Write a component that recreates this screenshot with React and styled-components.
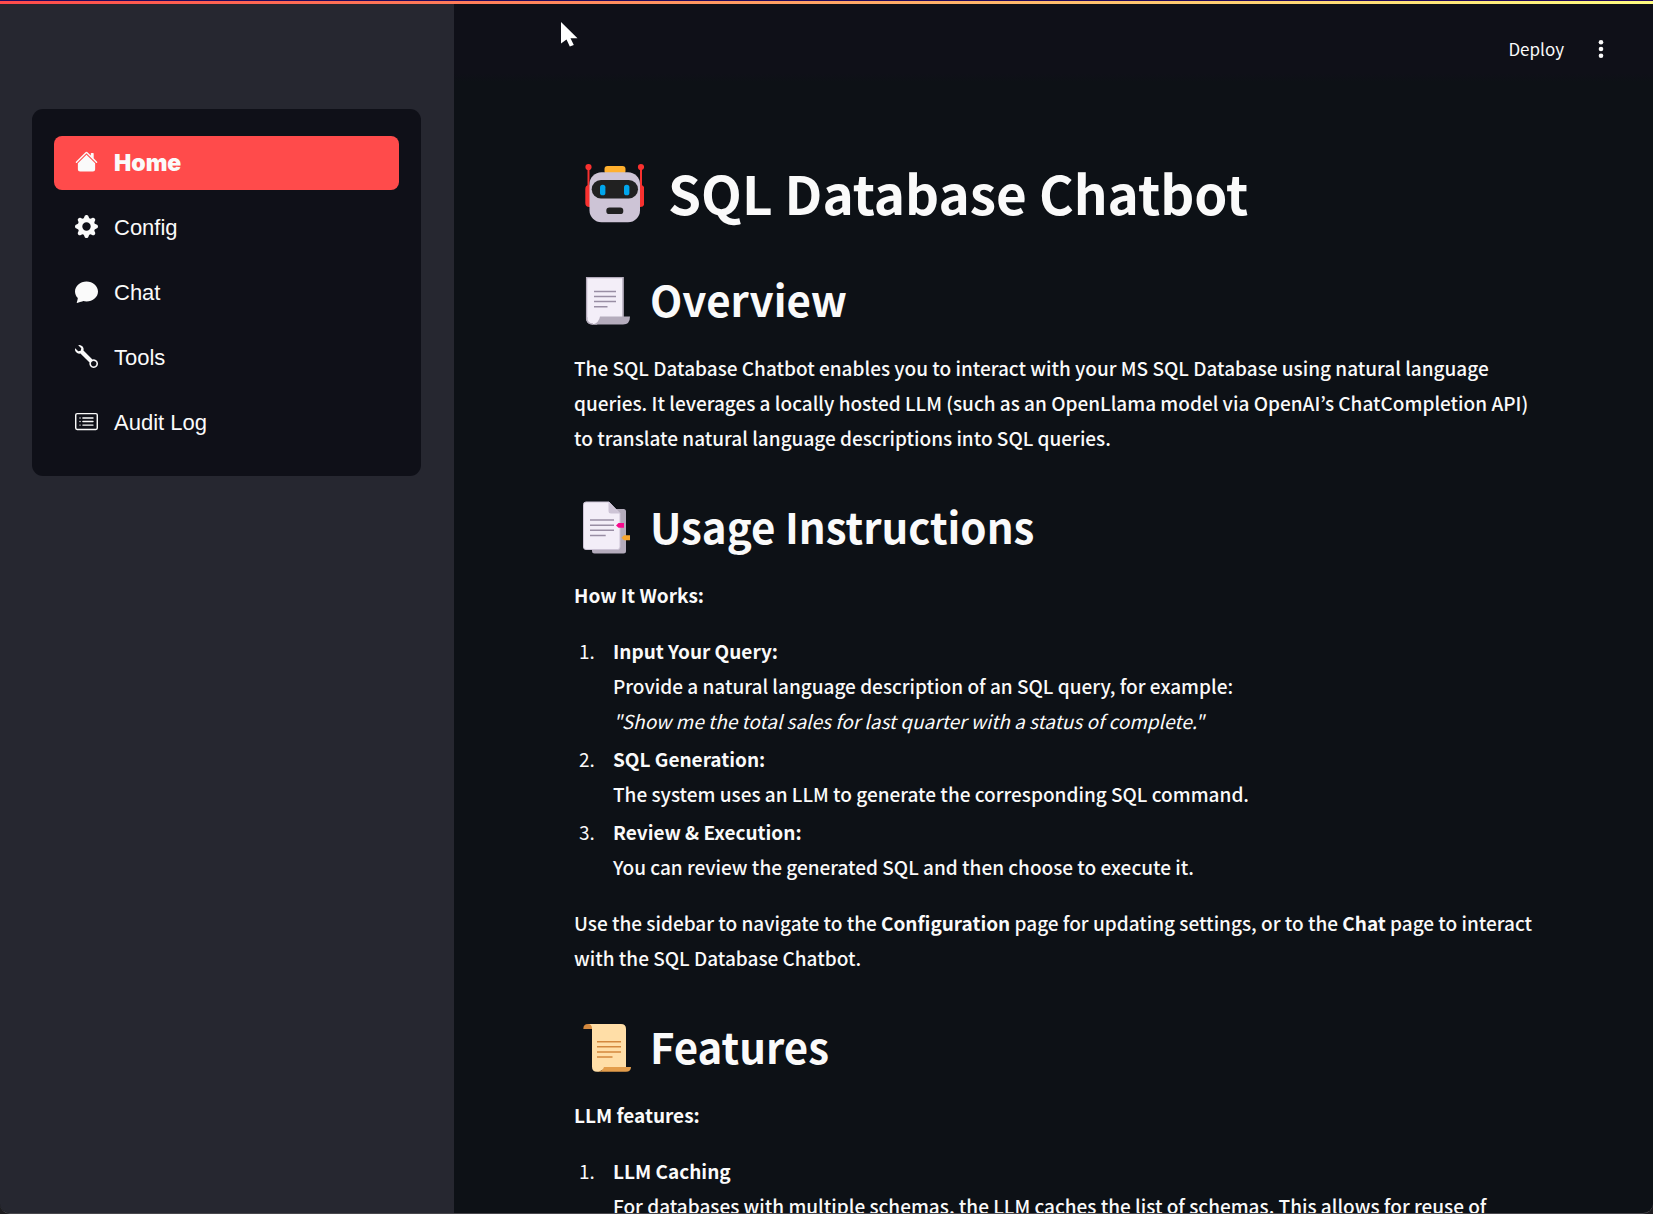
import React from "react";
import styled, { createGlobalStyle } from "styled-components";
import { BsHouseFill, BsGearFill, BsChatFill, BsWrench, BsCardList } from "react-icons/bs";

const GlobalStyle = createGlobalStyle`
  *, *::before, *::after { box-sizing: border-box; }
  html, body { margin: 0; height: 100%; background: #1d1c20; }
  body { overflow: hidden; }
  #root { height: 100%; }
`;

const Window = styled.div`
  position: relative;
  height: 100vh;
  display: flex;
  overflow: hidden;
  border-bottom: 1px solid #48474c;
  border-radius: 0 0 10px 10px;
  background: #0d1116;
  color: #fafafa;
  font-family: "Noto Sans CJK JP", "Noto Sans CJK SC", sans-serif;
  font-size: 19px;
  line-height: 35px;
`;

const Decoration = styled.div`
  position: absolute;
  inset: 0 0 auto;
  height: 4px;
  z-index: 2;
  border-top: 1px solid #220a5e;
  background: linear-gradient(90deg, #ff4b4b, #fffd80);
`;

const Sidebar = styled.aside`
  flex: 0 0 454px;
  padding: 109px 33px 0 32px;
  background: #262730;
`;

const Menu = styled.nav`
  display: flex;
  flex-direction: column;
  gap: 11px;
  padding: 27px 22px 26px;
  border-radius: 11px;
  background: #0f1018;
`;

const MenuLink = styled.a`
  display: flex;
  align-items: center;
  gap: 16px;
  height: 54px;
  padding: 0 21px;
  border-radius: 8px;
  background: ${(p) => (p.$active ? "#ff4b4b" : "transparent")};
  color: #fafafa;
  font-family: ${(p) => (p.$active ? '"Arial Black", Inter' : '"Liberation Sans", Arial')}, sans-serif;
  font-size: ${(p) => (p.$active ? 23 : 22)}px;
  line-height: 32px;
  font-weight: ${(p) => (p.$active ? 900 : 400)};
  text-decoration: none;

  svg {
    flex: none;
    width: 23px;
    height: 23px;
    margin-bottom: 3px;
  }
`;

const Main = styled.main`
  flex: 1;
  min-width: 0;
  overflow: hidden;
`;

const Header = styled.header`
  display: flex;
  align-items: center;
  justify-content: flex-end;
  gap: 26px;
  height: 82px;
  padding: 16px 41px 0 0;
  background: linear-gradient(#0f1018 90%, #0d1116);
`;

const HeaderButton = styled.button`
  display: flex;
  align-items: center;
  padding: 0;
  border: 0;
  background: none;
  color: #fafafa;
  font-family: inherit;
  font-size: 17px;
  line-height: 28px;
`;

const Article = styled.article`
  padding: 67px 120px 0 120px;
  font-weight: 500;

  strong { font-weight: 700; }
  em { font-weight: 400; }
`;

const Title = styled.h1`
  display: flex;
  align-items: center;
  gap: 24px;
  margin: 0;
  padding-left: 8px;
  font-size: 53px;
  line-height: 86px;
  font-weight: 700;

  svg { flex: none; }
`;

const Heading = styled.h2`
  display: flex;
  align-items: center;
  gap: 16px;
  margin: 0 0 16px;
  padding-left: 8px;
  font-size: 42px;
  line-height: 70px;
  font-weight: 600;

  svg { flex: none; overflow: visible; }
`;

const Section = styled.section`
  margin-top: ${(p) => (p.$first ? 29 : 36)}px;
`;

const Text = styled.p`
  margin: 0 0 21px;
`;

const Steps = styled.ol`
  margin: 0 0 21px;
  padding: 0 0 0 25px;
`;

const Step = styled.li`
  padding-left: 14px;

  &::marker { font-weight: 400; }
  & + & { margin-top: 3px; }
`;

const Pointer = styled.svg`
  position: absolute;
  left: 560px;
  top: 21px;
  z-index: 3;
`;

function RobotIcon() {
  return (
    <svg width="62" height="62" viewBox="2 3 62 62" aria-hidden="true">
      <path d="M8.5 9v22M61 9v22" stroke="#f8312f" strokeWidth="2" />
      <circle cx="8.5" cy="9" r="3.1" fill="#f8312f" />
      <circle cx="61" cy="9" r="3.1" fill="#f8312f" />
      <rect x="5.3" y="27" width="10" height="22" rx="4" fill="#f8312f" />
      <rect x="54.3" y="27" width="10" height="22" rx="4" fill="#f8312f" />
      <rect x="24.5" y="8" width="21" height="8" rx="3" fill="#ffb02e" />
      <rect x="9.5" y="14.2" width="50.5" height="50" rx="12" fill="#cdc4d6" />
      <rect x="11.7" y="22" width="46.3" height="18.5" rx="9.2" fill="#212121" />
      <rect x="20" y="26.7" width="5.4" height="10.6" rx="2.6" fill="#00a6ed" />
      <rect x="44" y="26.7" width="5.4" height="10.6" rx="2.6" fill="#00a6ed" />
      <rect x="26.3" y="49.5" width="17" height="6.6" rx="3.2" fill="#212121" />
    </svg>
  );
}

function PageIcon() {
  return (
    <svg width="52" height="52" viewBox="0 0 52 52" aria-hidden="true">
      <path d="M4 4H41.500V46H20L15 51.500H11Q4 51.500 4 44.500Z" fill="#f3eef8" />
      <path d="M4.600 46V4.600H40.900V44" fill="none" stroke="#b4acbc" strokeWidth="1.300" />
      <path d="M18 43.500H48Q48 51.500 41 51.500H10.500Q17 50 18 43.500Z" fill="#b4acbc" />
      <path d="M4.600 44Q4.600 51 11 51" fill="none" stroke="#b4acbc" strokeWidth="1.300" />
      <path d="M12 18.500H34M12 23.500H34M12 28.500H34M12 33.700H25.500" stroke="#998ea4" strokeWidth="1.500" />
    </svg>
  );
}

function BookmarkTabsIcon() {
  return (
    <svg width="52" height="52" viewBox="0 0 52 52" aria-hidden="true">
      <rect x="10" y="9" width="34" height="44.500" rx="2.500" fill="#b4acbc" />
      <path d="M4 2H27L38 13.500V47Q38 49.500 35.500 49.500H4Q1.500 49.500 1.500 47V4.500Q1.500 2 4 2Z" fill="#f3eef8" stroke="#cdc4d6" strokeWidth="1" />
      <path d="M26.500 2L38 13.500H29Q26.500 13.500 26.500 11Z" fill="#cdc4d6" />
      <path d="M8 20H32M8 25.200H32M8 30.300H32M8 35.500H23.700" stroke="#998ea4" strokeWidth="1.500" />
      <path d="M42 23H36.500L34 25.400L36.500 27.800H42Z" fill="#f70a8d" />
      <path d="M48 35.300H42L39.500 37.700L42 40.200H48Z" fill="#f9a72e" />
    </svg>
  );
}

function ScrollIcon() {
  return (
    <svg width="52" height="52" viewBox="0 0 52 52" aria-hidden="true">
      <path d="M1.300 9Q1.300 4 6 4H12V9Z" fill="#d3883e" />
      <path d="M6 4H39Q44 4 44 9V49H22L17 51.700H15Q10 51.700 10 46.700V9Q10 4 6 4Z" fill="#ffdea7" />
      <path d="M22 47H49Q49 51.700 44 51.700H15.500Q20.500 51.500 22 47Z" fill="#e39d4b" />
      <path d="M15 21.700H39M15 26.800H39M15 32H39M15 37H30.500" stroke="#d3883e" strokeWidth="1.500" />
    </svg>
  );
}

export default function App() {
  return (
    <Window>
      <GlobalStyle />
      <Decoration />
      <Sidebar>
        <Menu>
          <MenuLink href="#home" $active><BsHouseFill />Home</MenuLink>
          <MenuLink href="#config"><BsGearFill />Config</MenuLink>
          <MenuLink href="#chat"><BsChatFill />Chat</MenuLink>
          <MenuLink href="#tools"><BsWrench />Tools</MenuLink>
          <MenuLink href="#audit"><BsCardList />Audit Log</MenuLink>
        </Menu>
      </Sidebar>
      <Main>
        <Header>
          <HeaderButton type="button">Deploy</HeaderButton>
          <HeaderButton type="button" aria-label="Main menu">
            <svg width="22" height="22" viewBox="0 0 22 22" fill="currentColor" aria-hidden="true">
              <circle cx="11" cy="4.300" r="2.300" />
              <circle cx="11" cy="11" r="2.300" />
              <circle cx="11" cy="17.700" r="2.300" />
            </svg>
          </HeaderButton>
        </Header>
        <Article>
          <Title><RobotIcon />SQL Database Chatbot</Title>
          <Section $first>
            <Heading><PageIcon />Overview</Heading>
            <Text>
              The SQL Database Chatbot enables you to interact with your MS SQL Database using natural language
              queries. It leverages a locally hosted LLM (such as an OpenLlama model via OpenAI’s ChatCompletion API)
              to translate natural language descriptions into SQL queries.
            </Text>
          </Section>
          <Section>
            <Heading><BookmarkTabsIcon />Usage Instructions</Heading>
            <Text><strong>How It Works:</strong></Text>
            <Steps>
              <Step>
                <strong>Input Your Query:</strong><br />
                Provide a natural language description of an SQL query, for example:<br />
                <em>"Show me the total sales for last quarter with a status of complete."</em>
              </Step>
              <Step>
                <strong>SQL Generation:</strong><br />
                The system uses an LLM to generate the corresponding SQL command.
              </Step>
              <Step>
                <strong>Review &amp; Execution:</strong><br />
                You can review the generated SQL and then choose to execute it.
              </Step>
            </Steps>
            <Text>
              Use the sidebar to navigate to the <strong>Configuration</strong> page for updating settings, or to
              the <strong>Chat</strong> page to interact with the SQL Database Chatbot.
            </Text>
          </Section>
          <Section>
            <Heading><ScrollIcon />Features</Heading>
            <Text><strong>LLM features:</strong></Text>
            <Steps>
              <Step>
                <strong>LLM Caching</strong><br />
                For databases with multiple schemas, the LLM caches the list of schemas. This allows for reuse of
              </Step>
            </Steps>
          </Section>
        </Article>
      </Main>
      <Pointer width="20" height="28" viewBox="-1 -1 20 28" aria-hidden="true">
        <path d="M0 0L16.500 16.300H9.500L12.800 23L8.800 24.500L5.500 17.500L0 21.500Z" fill="#fff" />
      </Pointer>
    </Window>
  );
}
